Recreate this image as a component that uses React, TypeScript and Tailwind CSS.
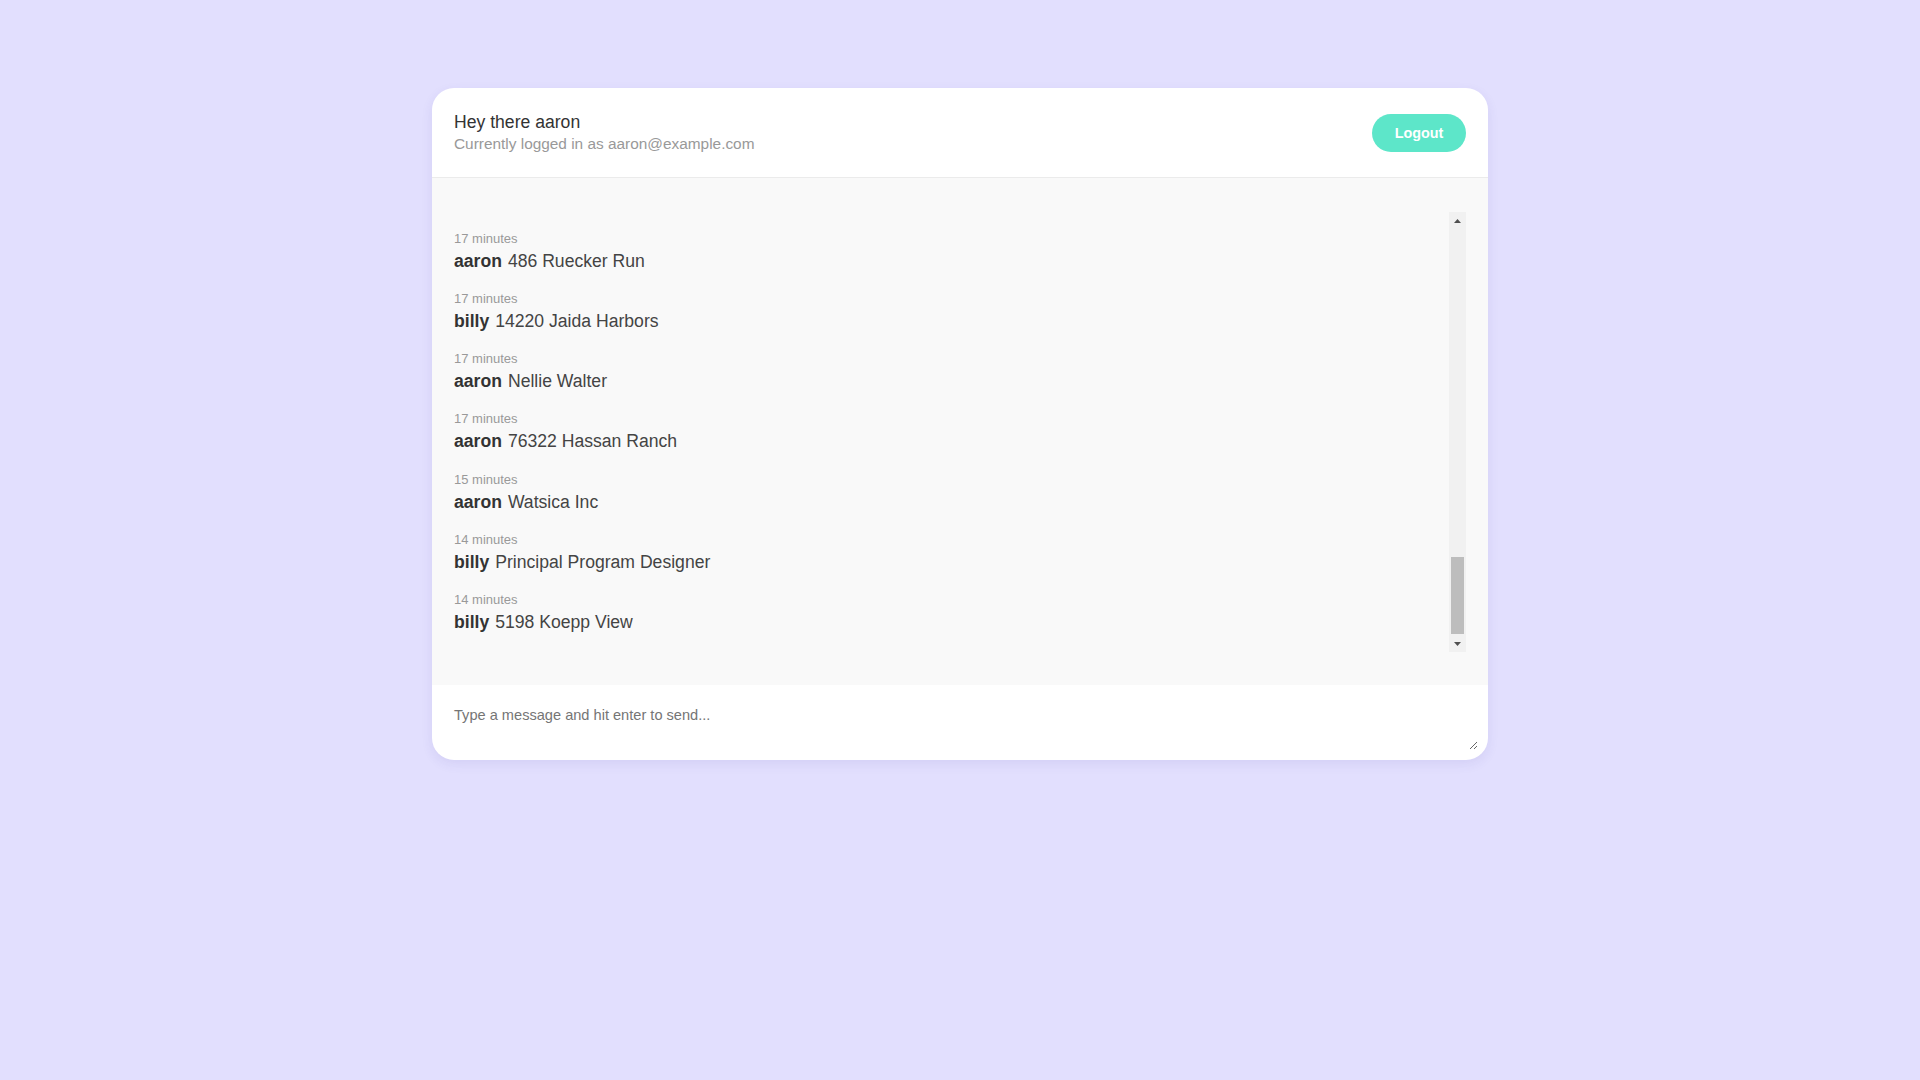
import { useLayoutEffect, useRef } from "react";

type Msg = { ago: string; user: string; text: string };

const older: Msg[] = [
  { ago: "32 minutes", user: "billy", text: "Hello there" },
  { ago: "32 minutes", user: "aaron", text: "Hey billy" },
  { ago: "31 minutes", user: "billy", text: "8734 Kuhn Squares" },
  { ago: "31 minutes", user: "aaron", text: "Lead Branding Officer" },
  { ago: "30 minutes", user: "aaron", text: "Schamberger Group" },
  { ago: "30 minutes", user: "billy", text: "Dario Hegmann" },
  { ago: "29 minutes", user: "aaron", text: "6621 Ondricka Mill" },
  { ago: "29 minutes", user: "billy", text: "Senior Data Analyst" },
  { ago: "28 minutes", user: "aaron", text: "Lueilwitz LLC" },
  { ago: "28 minutes", user: "aaron", text: "Alta Kertzmann" },
  { ago: "27 minutes", user: "billy", text: "112 Dibbert Lights" },
  { ago: "27 minutes", user: "aaron", text: "Human Paradigm Agent" },
  { ago: "26 minutes", user: "billy", text: "Wolff and Sons" },
  { ago: "26 minutes", user: "aaron", text: "Maribel Rau" },
  { ago: "25 minutes", user: "billy", text: "40871 Emard Forks" },
  { ago: "25 minutes", user: "billy", text: "Dynamic Web Liaison" },
  { ago: "24 minutes", user: "aaron", text: "Kessler Inc" },
  { ago: "24 minutes", user: "billy", text: "Ottilie Bode" },
  { ago: "23 minutes", user: "aaron", text: "905 Gleason Stream" },
  { ago: "23 minutes", user: "aaron", text: "Central Tactics Planner" },
  { ago: "22 minutes", user: "billy", text: "Hintz Group" },
  { ago: "22 minutes", user: "aaron", text: "Reggie Cassin" },
  { ago: "21 minutes", user: "billy", text: "3310 Marvin Hollow" },
  { ago: "21 minutes", user: "aaron", text: "Forward Markets Producer" },
  { ago: "20 minutes", user: "billy", text: "Bogan LLC" },
  { ago: "20 minutes", user: "aaron", text: "Jaylen Morar" },
  { ago: "19 minutes", user: "billy", text: "71 Reilly Ways" },
  { ago: "19 minutes", user: "aaron", text: "Legacy Usability Engineer" },
  { ago: "18 minutes", user: "billy", text: "Funk and Sons" },
  { ago: "18 minutes", user: "aaron", text: "Hettie Zulauf" },
  { ago: "18 minutes", user: "billy", text: "2290 Walter Path" },
];

const recent: Msg[] = [
  { ago: "17 minutes", user: "aaron", text: "486 Ruecker Run" },
  { ago: "17 minutes", user: "billy", text: "14220 Jaida Harbors" },
  { ago: "17 minutes", user: "aaron", text: "Nellie Walter" },
  { ago: "17 minutes", user: "aaron", text: "76322 Hassan Ranch" },
  { ago: "15 minutes", user: "aaron", text: "Watsica Inc" },
  { ago: "14 minutes", user: "billy", text: "Principal Program Designer" },
  { ago: "14 minutes", user: "billy", text: "5198 Koepp View" },
];

const messages = [...older, ...recent];

// classic scrollbar, drawn since the headless page hides native ones
function ScrollBar() {
  return (
    <div className="flex w-[17px] shrink-0 flex-col items-center bg-[#f1f1f1]">
      <div className="flex h-[17px] w-full items-center justify-center">
        <svg width="7" height="4" viewBox="0 0 7 4">
          <path d="M3.5 0 L7 4 L0 4 Z" fill="#505050" />
        </svg>
      </div>
      <div className="flex w-full flex-1 flex-col px-[2px] pt-[328px]">
        <div className="h-[77px] bg-[#bdbdbd]" />
      </div>
      <div className="flex h-[17px] w-full items-center justify-center">
        <svg width="7" height="4" viewBox="0 0 7 4">
          <path d="M0 0 L7 0 L3.5 4 Z" fill="#505050" />
        </svg>
      </div>
    </div>
  );
}

export default function App() {
  const listRef = useRef<HTMLDivElement>(null);

  useLayoutEffect(() => {
    const el = listRef.current;
    if (el) el.scrollTop = el.scrollHeight;
  }, []);

  return (
    <div className="min-h-screen bg-[#e2dffe] pt-[88px] font-['Liberation_Sans',Arial,sans-serif]">
      <div className="mx-auto w-[1056px] overflow-hidden rounded-[22px] bg-white shadow-[0_4px_12px_rgba(70,60,160,0.09)]">
        {/* header */}
        <div className="flex h-[90px] items-center justify-between border-b border-[#ebebeb] px-[22px]">
          <div className="-mt-[1px]">
            <h1 className="text-[17.6px] leading-[21px] text-[#333]">Hey there aaron</h1>
            <p className="mt-[2px] text-[15.4px] leading-[18px] text-[#999]">
              Currently logged in as aaron@example.com
            </p>
          </div>
          <button className="mt-[1px] h-[38px] w-[94px] rounded-full bg-[#5de6c9] pt-[1px] text-[14.4px] font-bold text-white">
            Logout
          </button>
        </div>

        {/* messages */}
        <div className="bg-[#f9f9f9] px-[22px] pb-[33px] pt-[34px]">
          <div className="flex h-[440px]">
            <div ref={listRef} className="min-w-0 flex-1 overflow-hidden">
              {messages.map((m, i) => (
                <div key={i} className="pb-[20.2px]">
                  <div className="text-[13px] leading-[15px] text-[#999]">{m.ago}</div>
                  <div className="mt-[5px] text-[17.6px] leading-[20px] text-[#444]">
                    <span className="mr-[6px] font-bold text-[#333]">{m.user}</span>
                    {m.text}
                  </div>
                </div>
              ))}
            </div>
            <ScrollBar />
          </div>
        </div>

        {/* composer */}
        <div className="h-[75px] p-[10px]">
          <textarea
            className="block h-full w-full resize-y bg-white p-3 text-[14.6px] leading-[17px] text-[#333] outline-none placeholder:text-[#757575]"
            placeholder="Type a message and hit enter to send..."
          />
        </div>
      </div>
    </div>
  );
}
